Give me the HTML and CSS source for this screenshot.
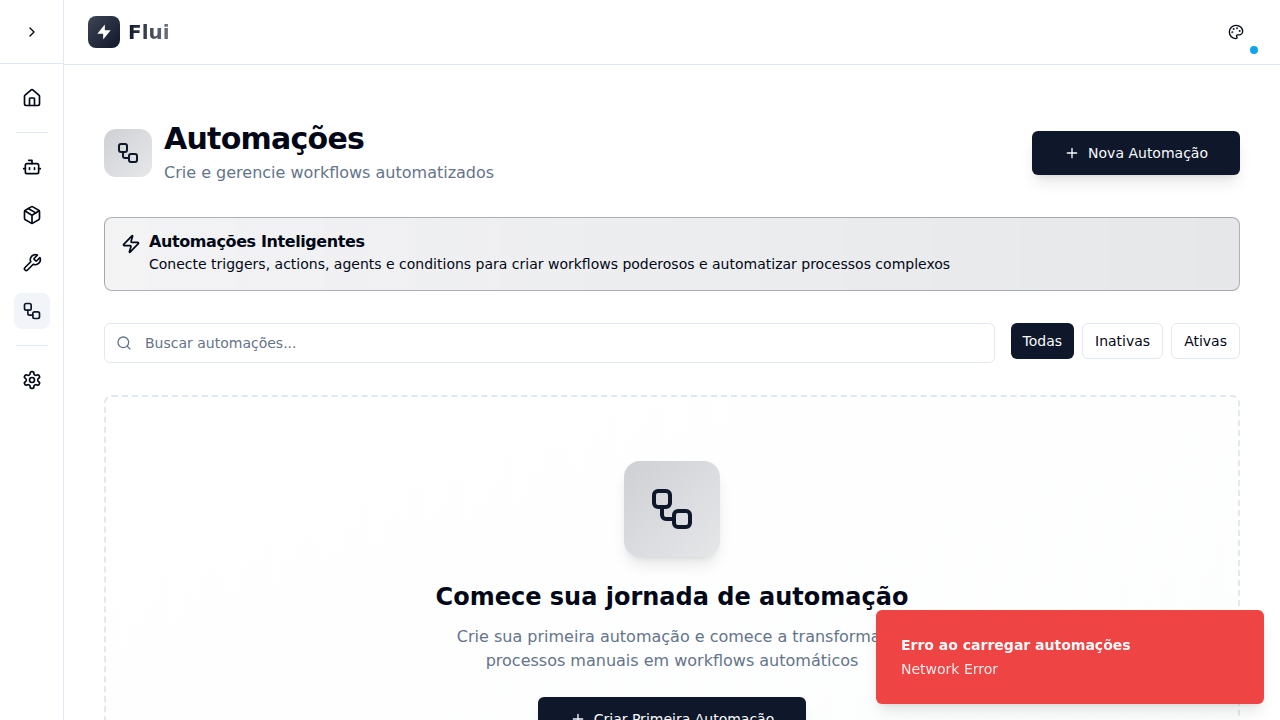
FILE: index.html
```html
<!DOCTYPE html>
<html lang="pt-BR">
<head>
<meta charset="utf-8">
<title>Flui</title>
<link rel="stylesheet" href="styles.css">
</head>
<body>
<svg class="sprite" aria-hidden="true">
  <symbol id="workflow" viewBox="0 0 24 24"><rect width="8" height="8" x="3" y="3" rx="2"/><path d="M7 11v4a2 2 0 0 0 2 2h4"/><rect width="8" height="8" x="13" y="13" rx="2"/></symbol>
  <symbol id="plus" viewBox="0 0 24 24"><path d="M5 12h14M12 5v14"/></symbol>
  <symbol id="zap" viewBox="0 0 24 24"><path d="M4 14a1 1 0 0 1-.78-1.63l9.9-10.2a.5.5 0 0 1 .86.46l-1.92 6.02A1 1 0 0 0 13 10h7a1 1 0 0 1 .78 1.63l-9.9 10.2a.5.5 0 0 1-.86-.46l1.92-6.02A1 1 0 0 0 11 14z"/></symbol>
</svg>
<div class="app">
  <aside class="sidebar">
    <div class="sidebar-head">
      <svg class="icon icon-16" viewBox="0 0 24 24"><path d="m9 18 6-6-6-6"/></svg>
    </div>
    <nav class="nav">
      <a class="nav-item"><svg class="icon icon-20" viewBox="0 0 24 24"><path d="M15 21v-8a1 1 0 0 0-1-1h-4a1 1 0 0 0-1 1v8"/><path d="M3 10a2 2 0 0 1 .709-1.528l7-5.999a2 2 0 0 1 2.582 0l7 5.999A2 2 0 0 1 21 10v9a2 2 0 0 1-2 2H5a2 2 0 0 1-2-2z"/></svg></a>
      <hr class="nav-sep">
      <div class="nav-group">
        <a class="nav-item"><svg class="icon icon-20" viewBox="0 0 24 24"><path d="M12 8V4H8"/><rect width="16" height="12" x="4" y="8" rx="2"/><path d="M2 14h2M20 14h2M15 13v2M9 13v2"/></svg></a>
        <a class="nav-item"><svg class="icon icon-20" viewBox="0 0 24 24"><path d="M11 21.73a2 2 0 0 0 2 0l7-4A2 2 0 0 0 21 16V8a2 2 0 0 0-1-1.73l-7-4a2 2 0 0 0-2 0l-7 4A2 2 0 0 0 3 8v8a2 2 0 0 0 1 1.73z"/><path d="M12 22V12"/><path d="m3.3 7 7.703 4.734a2 2 0 0 0 1.994 0L20.7 7"/><path d="m7.5 4.27 9 5.15"/></svg></a>
        <a class="nav-item"><svg class="icon icon-20" viewBox="0 0 24 24"><path d="M14.7 6.3a1 1 0 0 0 0 1.4l1.6 1.6a1 1 0 0 0 1.4 0l3.77-3.77a6 6 0 0 1-7.94 7.94l-6.91 6.91a2.12 2.12 0 0 1-3-3l6.91-6.91a6 6 0 0 1 7.94-7.94l-3.76 3.76z"/></svg></a>
        <a class="nav-item active"><svg class="icon icon-20"><use href="#workflow"/></svg></a>
      </div>
      <hr class="nav-sep">
      <a class="nav-item"><svg class="icon icon-20" viewBox="0 0 24 24"><path d="M12.22 2h-.44a2 2 0 0 0-2 2v.18a2 2 0 0 1-1 1.73l-.43.25a2 2 0 0 1-2 0l-.15-.08a2 2 0 0 0-2.73.73l-.22.38a2 2 0 0 0 .73 2.73l.15.1a2 2 0 0 1 1 1.72v.51a2 2 0 0 1-1 1.74l-.15.09a2 2 0 0 0-.73 2.73l.22.38a2 2 0 0 0 2.73.73l.15-.08a2 2 0 0 1 2 0l.43.25a2 2 0 0 1 1 1.73V20a2 2 0 0 0 2 2h.44a2 2 0 0 0 2-2v-.18a2 2 0 0 1 1-1.73l.43-.25a2 2 0 0 1 2 0l.15.08a2 2 0 0 0 2.73-.73l.22-.39a2 2 0 0 0-.73-2.73l-.15-.08a2 2 0 0 1-1-1.74v-.5a2 2 0 0 1 1-1.74l.15-.09a2 2 0 0 0 .73-2.73l-.22-.38a2 2 0 0 0-2.73-.73l-.15.08a2 2 0 0 1-2 0l-.43-.25a2 2 0 0 1-1-1.73V4a2 2 0 0 0-2-2z"/><circle cx="12" cy="12" r="3"/></svg></a>
    </nav>
  </aside>
  <div class="main">
    <header class="topbar">
      <div class="brand">
        <span class="logo"><svg viewBox="0 0 24 24"><path d="M13 10V3L4 14h7v7l9-11h-7z"/></svg></span>
        <span class="brand-name">Flui</span>
      </div>
      <button class="theme-btn"><svg class="icon icon-16" viewBox="0 0 24 24"><circle cx="13.5" cy="6.5" r=".5"/><circle cx="17.5" cy="10.5" r=".5"/><circle cx="8.5" cy="7.5" r=".5"/><circle cx="6.5" cy="12.5" r=".5"/><path d="M12 2C6.5 2 2 6.5 2 12s4.5 10 10 10c.926 0 1.648-.746 1.648-1.688 0-.437-.18-.835-.437-1.125-.29-.289-.438-.652-.438-1.125a1.64 1.64 0 0 1 1.668-1.668h1.996c3.051 0 5.555-2.503 5.555-5.554C21.965 6.012 17.461 2 12 2z"/></svg><span class="theme-dot"></span></button>
    </header>
    <main class="content">
      <div class="page-head">
        <div class="page-title">
          <span class="tile"><svg class="icon icon-24"><use href="#workflow"/></svg></span>
          <div><h1>Automações</h1><p>Crie e gerencie workflows automatizados</p></div>
        </div>
        <button class="btn-primary"><svg class="icon icon-16"><use href="#plus"/></svg>Nova Automação</button>
      </div>
      <section class="alert">
        <svg class="icon icon-20"><use href="#zap"/></svg>
        <div><h5>Automações Inteligentes</h5><p>Conecte triggers, actions, agents e conditions para criar workflows poderosos e automatizar processos complexos</p></div>
      </section>
      <div class="filters">
        <label class="search"><svg class="icon icon-16" viewBox="0 0 24 24"><circle cx="11" cy="11" r="8"/><path d="m21 21-4.3-4.3"/></svg><input type="text" placeholder="Buscar automações..."></label>
        <div class="filter-group">
          <button class="filter selected">Todas</button><button class="filter">Inativas</button><button class="filter">Ativas</button>
        </div>
      </div>
      <section class="empty">
        <span class="tile tile-lg"><svg class="icon icon-48"><use href="#workflow"/></svg></span>
        <h3>Comece sua jornada de automação</h3>
        <p>Crie sua primeira automação e comece a transformar processos manuais em workflows automáticos</p>
        <button class="btn-primary"><svg class="icon icon-16"><use href="#plus"/></svg>Criar Primeira Automação</button>
      </section>
    </main>
  </div>
</div>
<div class="toast"><strong>Erro ao carregar automações</strong><span>Network Error</span></div>
</body>
</html>
```
FILE: styles.css
```css
* { box-sizing: border-box; margin: 0; padding: 0; }
body { font-family: "DejaVu Sans", sans-serif; font-size: 16px; line-height: 24px; color: #020817; background: #fff; height: 100vh; overflow: hidden; }
button, input { font: inherit; color: inherit; border: 0; background: none; }
.sprite { display: none; }
.icon { display: block; flex: none; fill: none; stroke: currentColor; stroke-width: 2; stroke-linecap: round; stroke-linejoin: round; }
.icon-16 { width: 16px; height: 16px; }
.icon-20 { width: 20px; height: 20px; }
.icon-24 { width: 24px; height: 24px; }
.icon-48 { width: 48px; height: 48px; }
.app { display: flex; height: 100vh; overflow: hidden; }

.sidebar { width: 64px; flex: none; border-right: 1px solid #e2e8f0; }
.sidebar-head { height: 64px; border-bottom: 1px solid #e2e8f0; display: flex; align-items: center; justify-content: center; }
.sidebar-head .icon { margin-left: 1px; }
.nav { display: flex; flex-direction: column; align-items: center; gap: 16px; padding: 16px 0 0 1px; }
.nav-group { display: flex; flex-direction: column; gap: 12px; }
.nav-item { width: 36px; height: 36px; border-radius: 8px; display: flex; align-items: center; justify-content: center; }
.nav-item.active { background: #f1f5f9; color: #0f172a; }
.nav-sep { width: 32px; height: 1px; border: 0; background: #e2e8f0; }

.main { flex: 1; min-width: 0; display: flex; flex-direction: column; }
.topbar { height: 65px; flex: none; border-bottom: 1px solid #e2e8f0; padding: 0 24px; display: flex; align-items: center; justify-content: space-between; }
.brand { display: flex; align-items: center; gap: 8px; }
.logo { width: 32px; height: 32px; border-radius: 8px; background: linear-gradient(to bottom right, #3f4555, #0f172a); display: flex; align-items: center; justify-content: center; }
.logo svg { width: 20px; height: 20px; fill: #fff; }
.brand-name { font-size: 20px; line-height: 28px; font-weight: 700; background: linear-gradient(to right, #0f172a, rgba(15, 23, 42, .6)); -webkit-background-clip: text; background-clip: text; color: transparent; }
.theme-btn { position: relative; width: 40px; height: 40px; display: flex; align-items: center; justify-content: center; }
.theme-dot { position: absolute; right: -2px; bottom: -2px; width: 8px; height: 8px; border-radius: 50%; background: #0ea5e9; }

.content { flex: 1; min-height: 0; padding: 56px 40px 0; display: flex; flex-direction: column; gap: 32px; }
.page-head { display: flex; align-items: center; justify-content: space-between; }
.page-title { display: flex; align-items: center; gap: 12px; }
.tile { width: 48px; height: 48px; border-radius: 12px; background: linear-gradient(to bottom right, rgba(15, 23, 42, .2), rgba(15, 23, 42, .1)); color: #0f172a; display: flex; align-items: center; justify-content: center; }
h1 { font-size: 30px; line-height: 36px; font-weight: 700; letter-spacing: -.025em; margin-bottom: 4px; }
.page-title p, .empty p { color: #64748b; }
.btn-primary { height: 44px; padding: 0 32px; border-radius: 6px; background: #0f172a; color: #f8fafc; font-size: 14px; line-height: 20px; display: flex; align-items: center; gap: 8px; box-shadow: 0 10px 15px -3px rgba(0, 0, 0, .1), 0 4px 6px -4px rgba(0, 0, 0, .1); }

.alert { height: 74px; border: 1px solid rgba(15, 23, 42, .3); border-radius: 8px; padding: 16px; background: linear-gradient(to right, rgba(15, 23, 42, .05), rgba(15, 23, 42, .1)); display: flex; gap: 8px; }
.alert h5 { font-size: 16px; line-height: 16px; font-weight: 600; letter-spacing: -.025em; margin-bottom: 4px; }
.alert p { font-size: 14px; line-height: 20px; }

.filters { display: flex; gap: 16px; }
.search { flex: 1; height: 40px; border: 1px solid #e2e8f0; border-radius: 6px; padding: 0 11px; display: flex; align-items: center; gap: 13px; color: #64748b; }
.search input { flex: 1; font-size: 14px; line-height: 20px; outline: 0; }
.search input::placeholder { color: #64748b; opacity: 1; }
.filter-group { display: flex; gap: 8px; }
.filter { height: 36px; padding: 0 12px; border: 1px solid #e2e8f0; border-radius: 6px; font-size: 14px; line-height: 20px; }
.filter.selected { background: #0f172a; color: #f8fafc; border: 0; }

.empty { flex: none; border: 2px dashed #e2e8f0; border-radius: 8px; padding: 64px 24px; background: linear-gradient(to bottom right, #fff, rgba(241, 245, 249, .2)); display: flex; flex-direction: column; align-items: center; text-align: center; }
.tile-lg { width: 96px; height: 96px; border-radius: 16px; box-shadow: 0 10px 15px -3px rgba(0, 0, 0, .1), 0 4px 6px -4px rgba(0, 0, 0, .1); margin-bottom: 24px; }
.empty h3 { font-size: 24px; line-height: 32px; font-weight: 700; margin-bottom: 12px; }
.empty p { max-width: 448px; margin-bottom: 24px; }

.toast { position: fixed; right: 16px; bottom: 16px; width: 388px; padding: 25px; border-radius: 6px; background: #ef4444; color: #f8fafc; font-size: 14px; line-height: 20px; display: flex; flex-direction: column; gap: 4px; box-shadow: 0 10px 15px -3px rgba(0, 0, 0, .1), 0 4px 6px -4px rgba(0, 0, 0, .1); }
.toast strong { font-weight: 600; }
.toast span { opacity: .9; }
```
